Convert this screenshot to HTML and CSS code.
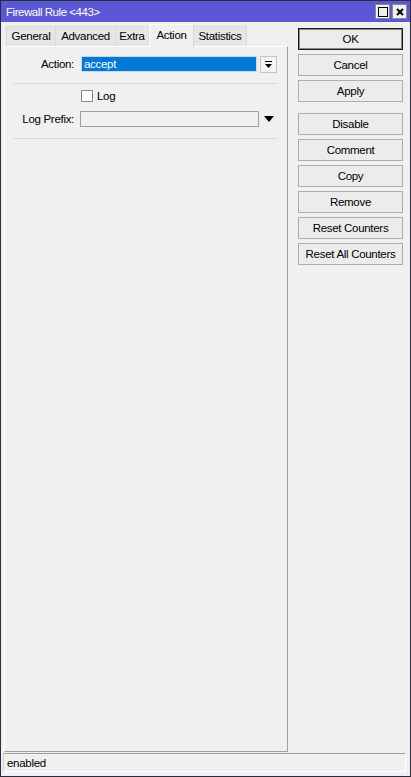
FILE: index.html
```html
<!DOCTYPE html>
<html lang="en">
<head>
  <title>Firewall Rule &lt;443&gt;</title>
  <meta charset="UTF-8"/>
  <link rel="stylesheet" href="styles.css">
</head>
<body>
  <div class="window">
    <div class="titlebar">
      <span class="title">Firewall Rule &lt;443&gt;</span>
      <span class="tbtn">
        <svg width="12" height="12" viewBox="0 0 12 12"><rect x="1.5" y="1.5" width="9" height="9" fill="none" stroke="#000" stroke-width="1"/></svg>
      </span>
      <span class="tbtn">
        <svg width="12" height="12" viewBox="0 0 12 12"><path d="M3 3 L9 9 M9 3 L3 9" stroke="#000" stroke-width="2"/></svg>
      </span>
    </div>
    <div class="main">
      <div class="left">
        <div class="tabs">
          <span class="tab t-general">General</span>
          <span class="tab t-advanced">Advanced</span>
          <span class="tab t-extra">Extra</span>
          <span class="tab t-action active">Action</span>
          <span class="tab t-stats">Statistics</span>
        </div>
        <div class="panel">
          <div class="row">
            <label class="lbl">Action:</label>
            <div class="field sel">accept</div>
            <span class="dropbtn">
              <svg width="9" height="9" viewBox="0 0 9 9"><rect x="1" y="1" width="7" height="1" fill="#000"/><path d="M1 4 H8 L4.5 8 Z" fill="#000"/></svg>
            </span>
          </div>
          <div class="sep"></div>
          <div class="row check-row">
            <span class="lbl"></span>
            <span class="check"></span>
            <span>Log</span>
          </div>
          <div class="row">
            <label class="lbl">Log Prefix:</label>
            <div class="field wide"></div>
            <span class="arrow">
              <svg width="10" height="6" viewBox="0 0 10 6"><path d="M0 0 H10 L5 6 Z" fill="#000"/></svg>
            </span>
          </div>
          <div class="sep"></div>
        </div>
      </div>
      <div class="side">
        <button class="btn default">OK</button>
        <button class="btn">Cancel</button>
        <button class="btn">Apply</button>
        <button class="btn gap">Disable</button>
        <button class="btn">Comment</button>
        <button class="btn">Copy</button>
        <button class="btn">Remove</button>
        <button class="btn">Reset Counters</button>
        <button class="btn">Reset All Counters</button>
      </div>
    </div>
    <div class="status">enabled</div>
  </div>
</body>
</html>
```

FILE: styles.css
```css
* {
  box-sizing: border-box;
  font-family: "Liberation Sans", Arial, sans-serif;
  font-size: 11.5px;
  letter-spacing: -0.3px;
}
body {
  margin: 0;
  background: #f0f0f0;
}
.window {
  width: 411px;
  height: 777px;
  border: 1px solid #2a2a3a;
  background: #f0f0f0;
  display: flex;
  flex-direction: column;
}
.titlebar {
  height: 21px;
  background: #5b58d6;
  color: white;
  display: flex;
  align-items: center;
  padding: 0 3px 0 5px;
  gap: 2px;
}
.title {
  flex: 1;
  color: white;
  letter-spacing: -0.45px;
}
.tbtn {
  width: 15px;
  height: 15px;
  background: #f0f0f0;
  border: 1px solid #8a8a8a;
  display: flex;
  align-items: center;
  justify-content: center;
}
.main {
  flex: 1;
  display: flex;
  padding: 2px 0 0 3px;
}
.left {
  width: 284px;
  display: flex;
  flex-direction: column;
}
.tabs {
  display: flex;
  height: 22px;
  align-items: flex-end;
  padding-left: 2px;
}
.tab {
  height: 20px;
  line-height: 19px;
  text-align: center;
  background: #e6e6e6;
  border: 1px solid #d9d9d9;
  border-bottom: none;
  border-left: none;
}
.t-general { width: 50px; border-left: 1px solid #d9d9d9; }
.t-advanced { width: 60px; }
.t-extra { width: 33px; }
.t-action { width: 45px; }
.t-stats { width: 53px; }
.tab.active {
  height: 23px;
  background: #f0f0f0;
  border: 1px solid #fff;
  border-bottom: none;
  border-right-color: #d9d9d9;
  line-height: 20px;
  position: relative;
  z-index: 1;
  margin-bottom: -1px;
}
.panel {
  flex: 1;
  border: 1px solid #fff;
  border-right-color: #a0a0a0;
  border-bottom-color: #a0a0a0;
  padding: 9px 9px 0 7px;
  margin-bottom: 1px;
}
.row {
  display: flex;
  align-items: center;
  height: 16px;
}
.lbl {
  width: 62px;
  text-align: right;
  margin-right: 6px;
}
.field {
  height: 16px;
  border: 1px solid #a0a0a0;
  background: #f0f0f0;
  padding-left: 2px;
  line-height: 14px;
}
.sel {
  width: 176px;
  margin-left: 1px;
  background: #0078d7;
  color: white;
  border-color: #c8d8ec;
}
.wide {
  width: 179px;
}
.dropbtn {
  width: 17px;
  height: 17px;
  margin-left: 3px;
  border: 1px solid #c4c4c4;
  background: #f4f4f4;
  display: flex;
  align-items: center;
  justify-content: center;
}
.arrow {
  margin-left: 5px;
  display: flex;
  align-items: center;
}
.sep {
  height: 1px;
  background: #d8d8d8;
  margin: 11px 0 6px 1px;
}
.check-row {
  height: 12px;
  margin-bottom: 9px;
}
.check-row .lbl {
  margin-right: 7px;
}
.check {
  width: 12px;
  height: 12px;
  border: 1px solid #8a8a8a;
  background: #fff;
  margin-right: 4px;
}
.side {
  display: flex;
  flex-direction: column;
  gap: 4px;
  padding: 4px 0 0 10px;
}
.btn {
  all: unset;
  box-sizing: border-box;
  width: 105px;
  height: 22px;
  border: 1px solid #adadad;
  background: #ececec;
  text-align: center;
  font-size: 11.5px;
  letter-spacing: -0.3px;
}
.btn.default {
  border: 1px solid #1a1a1a;
  box-shadow: inset 0 0 0 1px #888;
}
.btn.gap {
  margin-top: 7px;
}
.status {
  height: 19px;
  margin: 0 4px 4px 2px;
  border-top: 1px solid #a0a0a0;
  border-left: 1px solid #d0d0d0;
  border-right: 1px solid #fff;
  border-bottom: 1px solid #fff;
  padding: 3px 3px 2px;
}
```
